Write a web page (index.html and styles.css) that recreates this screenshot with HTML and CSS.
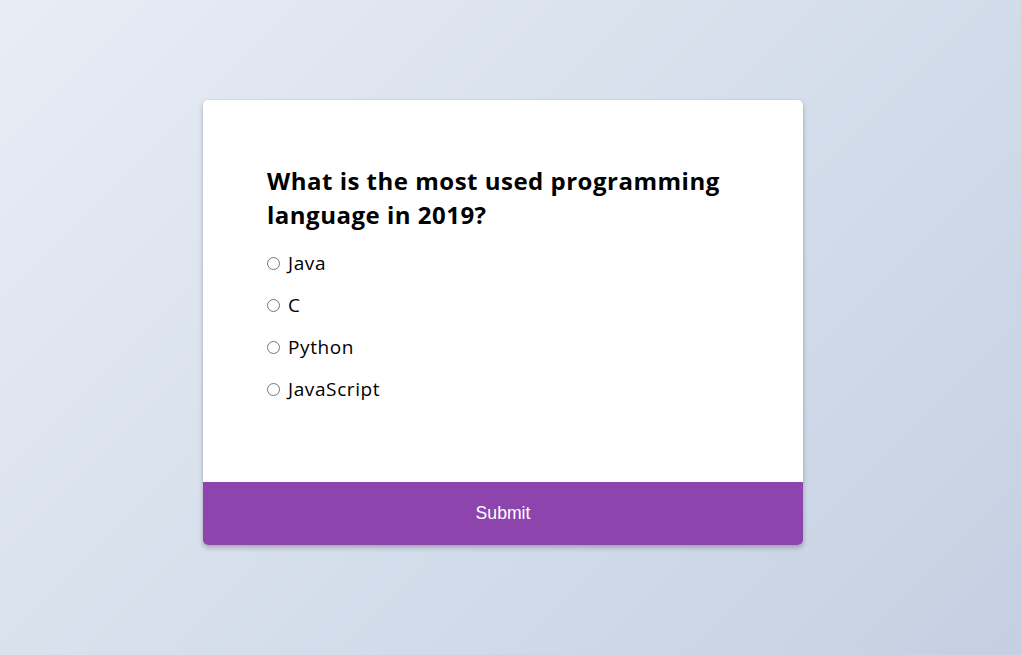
FILE: index.html
```html
<!DOCTYPE html>
<html lang="en">
<head>
<meta charset="UTF-8">
<title>Quiz</title>
<link rel="stylesheet" href="styles.css">
</head>
<body>
<div class="quiz-container">
  <div class="quiz-header">
    <h2 class="question">What is the most used programming language in 2019?</h2>
    <ul class="answers">
      <li><label class="answer"><input type="radio" name="answer" class="radio"><span>Java</span></label></li>
      <li><label class="answer"><input type="radio" name="answer" class="radio"><span>C</span></label></li>
      <li><label class="answer"><input type="radio" name="answer" class="radio"><span>Python</span></label></li>
      <li><label class="answer"><input type="radio" name="answer" class="radio"><span>JavaScript</span></label></li>
    </ul>
  </div>
  <button class="submit">Submit</button>
</div>
</body>
</html>
```

FILE: styles.css
```css
* { box-sizing: border-box; }
html, body { margin: 0; height: 100%; }
body {
  background: linear-gradient(135deg, #e8edf5 0%, #c4d0e2 100%);
  font-family: "Open Sans", sans-serif;
  display: flex;
  align-items: center;
  justify-content: center;
  padding: 0 15px 10px 0;
  min-height: 100vh;
}
.quiz-container {
  width: 600px;
  background: #fff;
  border-radius: 5px;
  box-shadow: 0 3px 5px rgba(0, 0, 0, 0.22), 0 0 3px rgba(0, 0, 0, 0.08);
  overflow: hidden;
}
.quiz-header {
  padding: 64px 64px 64px;
}
.question {
  margin: 0 0 18px;
  font-size: 24px;
  line-height: 34px;
  font-weight: 700;
  color: #000;
  letter-spacing: 0.5px;
}
.answers {
  list-style: none;
  margin: 0;
  padding: 0;
}
.answers li {
  margin: 0 0 16px;
  height: 26px;
}
.answer {
  display: flex;
  align-items: center;
  font-size: 19px;
  color: #000;
  line-height: 26px;
  letter-spacing: 0.6px;
}
.radio {
  margin: 0 8px 0 0;
  width: 13px;
  height: 13px;
}
.submit {
  display: block;
  width: 100%;
  border: none;
  background: #8e44ad;
  color: #fff;
  font-family: "Liberation Sans", Arial, sans-serif;
  font-size: 17.6px;
  height: 63px;
  padding: 0;
  cursor: pointer;
}
```
